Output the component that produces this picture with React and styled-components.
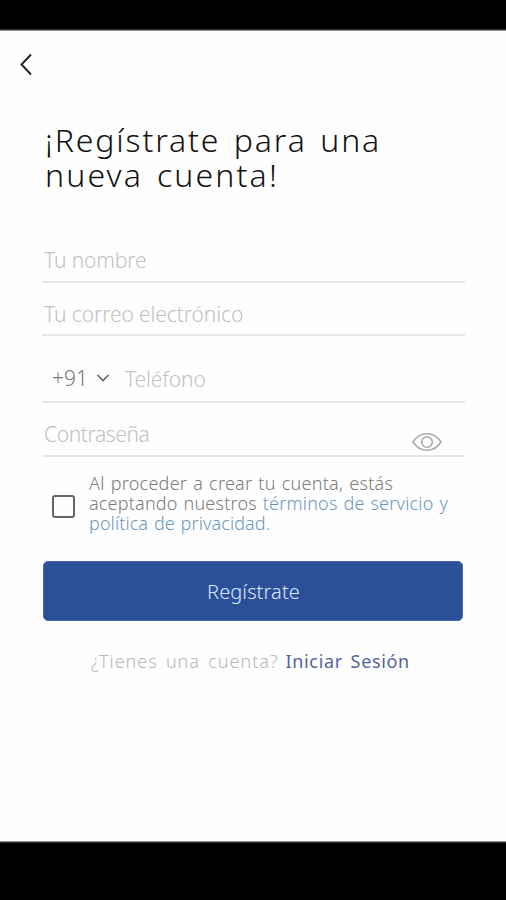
import React, { useState } from 'react'

import styled, { createGlobalStyle } from 'styled-components'

const GlobalStyle = createGlobalStyle`
  * {
    box-sizing: border-box;
  }
  body {
    margin: 0;
    background: #000;
    font-family: 'Noto Sans', 'Open Sans', sans-serif;
    font-weight: 300;
  }
`

const Screen = styled.div`
  width: 506px;
  height: 900px;
  padding: 30px 0 58px;
  background: #000;
  overflow: hidden;
`

const Page = styled.main`
  height: 812px;
  padding: 0 42px;
  background: #fefefe;
  border-top: 1px solid #8c8c8c;
  border-bottom: 1px solid #8c8c8c;
  box-shadow: 0 0 0 1px #333;
`

const BackButton = styled.button`
  display: block;
  width: 24px;
  height: 30px;
  margin: 19px 0 0 -28px;
  padding: 0;
  border: 0;
  background: none;
  svg {
    display: block;
  }
`

const Title = styled.h1`
  height: 72px;
  margin: 42px 0 0;
  padding-left: 3px;
  color: #111;
  font-size: 32px;
  font-weight: 300;
  line-height: 35px;
  word-spacing: 3.4px;
  white-space: nowrap;
`

const Form = styled.form`
  padding-top: 44px;
`

const Field = styled.label`
  display: flex;
  align-items: center;
  width: 423px;
  height: ${({ $height }) => $height}px;
  padding: ${({ $top }) => $top}px 0 0 2px;
  border-bottom: 2px solid #e6e6e6;
`

const Placeholder = styled.span`
  color: #c2c2c2;
  font-size: 21px;
  line-height: 28px;
  letter-spacing: ${({ $spacing }) => $spacing}px;
  white-space: nowrap;
`

const CountryCode = styled.span`
  display: flex;
  align-items: center;
  width: 81px;
  padding-left: 8px;
  margin-top: -2px;
  color: #777;
  font-size: 21px;
  line-height: 28px;
  svg {
    margin-left: 8px;
  }
`

const EyeIcon = styled.svg`
  margin: 15px 23px 0 auto;
`

const Terms = styled.div`
  display: flex;
  align-items: center;
  height: 104px;
  padding: 0 0 13px 10px;
`

const Checkbox = styled.button`
  width: 23px;
  height: 23px;
  margin-top: 7px;
  padding: 0;
  border: 2px solid #666;
  border-radius: 3px;
  background: ${({ $checked }) => ($checked ? '#2b5099' : 'transparent')};
`

const TermsText = styled.p`
  margin: 0 0 0 14px;
  color: #7c7c7c;
  font-size: 18px;
  line-height: 20px;
  word-spacing: 1px;
  white-space: nowrap;
`

const Line = styled.span`
  display: block;
  letter-spacing: ${({ $spacing }) => $spacing}px;
`

const Link = styled.span`
  color: #6b98bd;
`

const SubmitButton = styled.button`
  display: block;
  width: 420px;
  height: 60px;
  margin-left: 1px;
  padding: 0 0 0 1px;
  border: 1px solid #4468a8;
  border-radius: 5px;
  background: #2b5099;
  color: #dce8fa;
  font: inherit;
  font-size: 20px;
  letter-spacing: 0.1px;
`

const SignIn = styled.p`
  display: flex;
  margin: 27px 0 0 49px;
  color: #b8b8b8;
  font-size: 18px;
  line-height: 26px;
  letter-spacing: 1px;
  word-spacing: 2.5px;
  white-space: nowrap;
`

const SignInLink = styled.span`
  margin-left: 7px;
  color: #53659a;
  font-weight: 400;
  letter-spacing: 0.65px;
`

function App() {
  const [accepted, setAccepted] = useState(false)

  return (
    <Screen>
      <GlobalStyle />
      <Page>
        <BackButton aria-label="Atrás">
          <svg width="24" height="30" viewBox="0 0 24 30" fill="none" stroke="#222" strokeWidth="1.9">
            <path d="M17 4.5L7.5 14.5L17 24.5" />
          </svg>
        </BackButton>

        <Title>
          <Line $spacing={1.85}>¡Regístrate para una</Line>
          <Line $spacing={2.15}>nueva cuenta!</Line>
        </Title>

        <Form onSubmit={e => e.preventDefault()}>
          <Field $height={45} $top={0}>
            <Placeholder $spacing={-0.15}>Tu nombre</Placeholder>
          </Field>
          <Field $height={53} $top={10}>
            <Placeholder $spacing={-0.1}>Tu correo electrónico</Placeholder>
          </Field>
          <Field $height={67} $top={21}>
            <CountryCode>
              +91
              <svg width="14" height="10" viewBox="0 0 14 10" fill="none" stroke="#666" strokeWidth="1.7">
                <path d="M1.5 2L7 7.5L12.5 2" />
              </svg>
            </CountryCode>
            <Placeholder $spacing={-0.1}>Teléfono</Placeholder>
          </Field>
          <Field $height={54} $top={10}>
            <Placeholder $spacing={-0.4}>Contraseña</Placeholder>
            <EyeIcon width="30" height="20" viewBox="0 0 30 20" fill="none" stroke="#aaa" strokeWidth="1.6">
              <path d="M1 10C8-1 22-1 29 10C22 21 8 21 1 10Z" />
              <circle cx="15" cy="10" r="5.3" />
            </EyeIcon>
          </Field>

          <Terms>
            <Checkbox
              type="button"
              aria-label="Aceptar"
              $checked={accepted}
              onClick={() => setAccepted(!accepted)}
            />
            <TermsText>
              <Line $spacing={0.27}>Al proceder a crear tu cuenta, estás</Line>
              <Line $spacing={0.2}>
                aceptando nuestros <Link>términos de servicio y</Link>
              </Line>
              <Line $spacing={0.1}>
                <Link>política de privacidad.</Link>
              </Line>
            </TermsText>
          </Terms>

          <SubmitButton>Regístrate</SubmitButton>
        </Form>

        <SignIn>
          ¿Tienes una cuenta?
          <SignInLink>Iniciar Sesión</SignInLink>
        </SignIn>
      </Page>
    </Screen>
  )
}

export default App
